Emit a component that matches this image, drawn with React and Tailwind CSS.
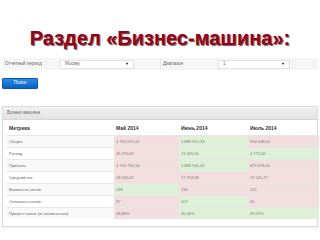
import React from "react";

const rows = [
  ["Оборот", ["1 792 075,00", "p"], ["1 889 912,33", "g"], ["904 548,00", "p"]],
  ["Расход", ["45 270,62", "p"], ["21 595,55", "g"], ["4 772,00", "g"]],
  ["Прибыль", ["1 716 790,16", "p"], ["1 868 316,45", "g"], ["879 676,00", "p"]],
  ["Средний чек", ["18 165,67", "p"], ["17 753,38", "p"], ["19 141,77", "p"]],
  ["Выписано счетов", ["248", "g"], ["230", "p"], ["121", "p"]],
  ["Оплачено счетов", ["97", "p"], ["107", "g"], ["61", "p"]],
  ["Процент оплат (от выписанных)", ["38,86%", "p"], ["45,34%", "g"], ["49,59%", "g"]],
];

function Cell({ v }) {
  return (
    <div
      className={
        "flex items-center pl-[2px] border-t border-[#e6e6e6] text-[#777] " +
        (v[1] === "p" ? "bg-[#f2dede]" : "bg-[#dff0d8]")
      }
    >
      {v[0]}
    </div>
  );
}

export default function App() {
  return (
    <div
      className="w-[320px] h-[240px] bg-white overflow-hidden text-[#333]"
      style={{ fontFamily: '"Liberation Sans", Arial, sans-serif' }}
    >
      <div className="h-[55px] flex items-center justify-center pt-[20px]">
        <h1 className="text-[20px] font-bold text-[#96001a] [text-shadow:1px_1px_1px_rgba(40,40,40,0.75)]">
          Раздел «Бизнес-машина»:
        </h1>
      </div>

      <div className="mx-[2px] h-[12px] mt-[3px] flex bg-[#f5f5f5] text-[4.5px] text-[#666]">
        <div className="w-[58px] flex items-center pl-[3px]">Отчетный период</div>
        <div className="w-[100px] flex items-center">
          <div className="w-[74px] h-[9px] bg-white border border-[#e2e2e2] flex items-center justify-between px-[4px]">
            <span>Москву</span>
            <span className="text-[4px] text-[#222]">▼</span>
          </div>
        </div>
        <div className="w-[58px] flex items-center pl-[2px] border-l border-[#e8e8e8]">Диапазон</div>
        <div className="flex-1 flex items-center">
          <div className="w-[72px] h-[9px] bg-white border border-[#e2e2e2] flex items-center justify-between px-[4px]">
            <span>1</span>
            <span className="text-[4px] text-[#222]">▼</span>
          </div>
        </div>
      </div>

      <div className="mt-[8px] ml-[2px] w-[36px] h-[11px] rounded-[1px] bg-gradient-to-b from-[#2b8ce3] to-[#0a5fc4] border border-[#0a55b0] text-white text-[4.5px] flex items-center justify-center">
        Поиск
      </div>

      <div className="mt-[17px] mx-[2px] border border-[#dcdcdc] shadow-[0_1px_2px_rgba(0,0,0,0.08)] h-[121px]">
        <div className="h-[13px] bg-gradient-to-b from-[#f2f2f2] to-[#e2e2e2] border-b border-[#d6d6d6] flex items-center pl-[4px] text-[4.5px] text-[#666]">
          Бизнес-машина
        </div>
        <div className="mx-[3px] grid grid-cols-[108px_65px_69px_71px] text-[4px] text-[#666]">
          <div className="h-[15px] flex items-center pl-[3px] pt-[2px] font-bold text-[5px] text-[#333]">Метрика</div>
          <div className="h-[15px] flex items-center pl-[2px] pt-[2px] font-bold text-[5px] text-[#333]">Май 2014</div>
          <div className="h-[15px] flex items-center pl-[2px] pt-[2px] font-bold text-[5px] text-[#333]">Июнь 2014</div>
          <div className="h-[15px] flex items-center pl-[2px] pt-[2px] font-bold text-[5px] text-[#333]">Июль 2014</div>
          {rows.map((r, i) => (
            <React.Fragment key={i}>
              <div
                className={
                  "h-[12px] flex items-center pl-[3px] border-t border-[#e6e6e6] " +
                  (i % 2 === 0 ? "bg-[#f9f9f9]" : "bg-white")
                }
              >
                {r[0]}
              </div>
              <Cell v={r[1]} />
              <Cell v={r[2]} />
              <Cell v={r[3]} />
            </React.Fragment>
          ))}
        </div>
      </div>
    </div>
  );
}
